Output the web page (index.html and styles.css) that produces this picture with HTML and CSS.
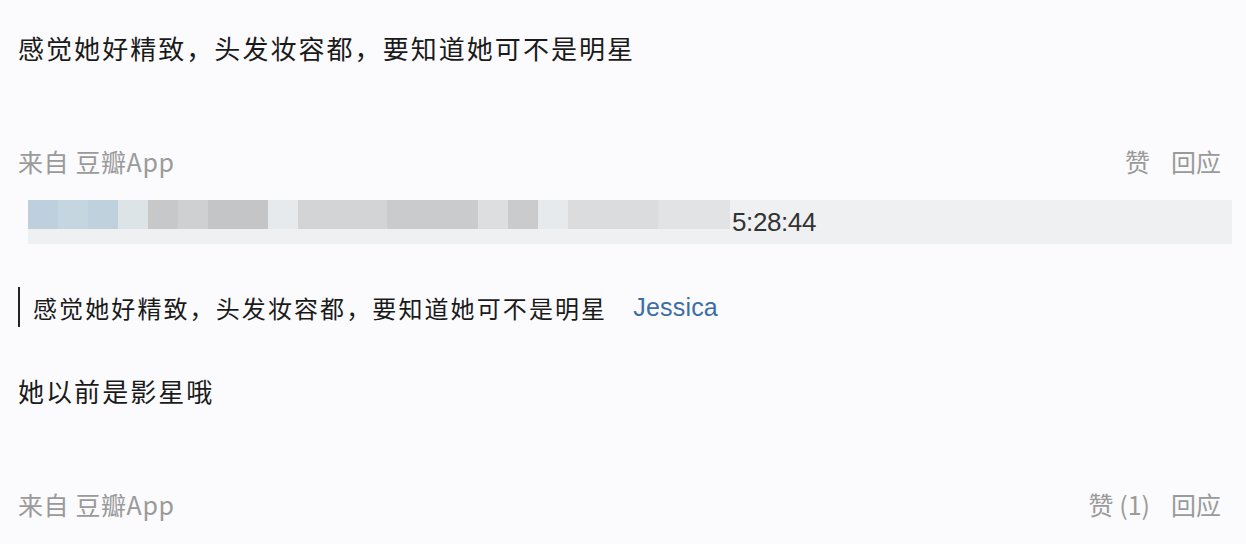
FILE: index.html
```html
<!DOCTYPE html>
<html lang="zh-CN">
<head>
<meta charset="utf-8">
<link rel="stylesheet" href="styles.css">
</head>
<body>
<div class="page">
  <p class="text first">感觉她好精致，头发妆容都，要知道她可不是明星</p>
  <div class="meta">
    <span class="from">来自 豆瓣App</span>
    <span class="actions"><span>赞</span><span>回应</span></span>
  </div>
  <div class="bar">
    <div class="mosaic">
      <i class="b1 w30"></i><i class="b2 w30"></i><i class="b3 w30"></i><i class="p1 w30"></i><i class="g1 w30"></i><i class="g2 w30"></i><i class="g3 w60"></i><i class="p2 w30"></i><i class="g4 w89"></i><i class="g5 w91"></i><i class="g6 w30"></i><i class="g5 w30"></i><i class="p2 w30"></i><i class="g7 w90"></i><i class="g8 w72"></i>
    </div>
    <span class="time">5:28:44</span>
  </div>
  <div class="quote">
    <span>感觉她好精致，头发妆容都，要知道她可不是明星</span>
    <a class="user">Jessica</a>
  </div>
  <p class="text second">她以前是影星哦</p>
  <div class="meta second-meta">
    <span class="from">来自 豆瓣App</span>
    <span class="actions"><span>赞 (1)</span><span>回应</span></span>
  </div>
</div>
</body>
</html>
```

FILE: styles.css
```css
html, body {
  margin: 0;
  padding: 0;
  background: #fbfbfd;
}
.page {
  padding: 0 25px 0 18px;
  font-family: "Noto Sans CJK SC", "Liberation Sans", sans-serif;
  color: #1a1a1a;
}
.text {
  margin: 0;
  font-size: 26px;
  line-height: 40px;
  letter-spacing: 2.05px;
}
.first { padding-top: 28px; }
.second { margin-top: 44px; }
.meta {
  display: flex;
  justify-content: space-between;
  align-items: center;
  margin-top: 73px;
  height: 40px;
  font-size: 25px;
  color: #9a9a9a;
}
.actions {
  display: flex;
  gap: 21px;
}
.from { letter-spacing: 0.6px; }
.bar {
  margin: 19px -11px 0 10px;
  height: 44px;
  background: #eff0f2;
  display: flex;
  align-items: flex-start;
}
.mosaic {
  display: flex;
  height: 29px;
  width: 702px;
  flex: none;
}
.mosaic i { display: block; height: 29px; }
.w30 { width: 30px; }
.w60 { width: 60px; }
.w72 { width: 72px; }
.w89 { width: 89px; }
.w90 { width: 90px; }
.w91 { width: 91px; }
.b1 { background: #bed0dd; }
.b2 { background: #c6d6e1; }
.b3 { background: #c0d1de; }
.p1 { background: #dde4e7; }
.p2 { background: #e7eaec; }
.g1 { background: #c6c8ca; }
.g2 { background: #cfd0d2; }
.g3 { background: #c3c5c7; }
.g4 { background: #d2d4d6; }
.g5 { background: #c9cbcd; }
.g6 { background: #dcdedf; }
.g7 { background: #dadcde; }
.g8 { background: #e1e3e4; }
.time {
  font-family: "Liberation Sans", sans-serif;
  font-size: 26px;
  line-height: 44px;
  color: #333;
  margin-left: 2px;
  letter-spacing: -0.4px;
}
.quote {
  margin-top: 43px;
  border-left: 2px solid #222;
  padding-left: 13px;
  height: 40px;
  display: flex;
  align-items: center;
  gap: 26px;
  font-size: 24px;
  letter-spacing: 2.1px;
}
.user {
  color: #3b6ea5;
  font-family: "Liberation Sans", sans-serif;
  font-size: 25px;
  letter-spacing: 0.2px;
}
```
